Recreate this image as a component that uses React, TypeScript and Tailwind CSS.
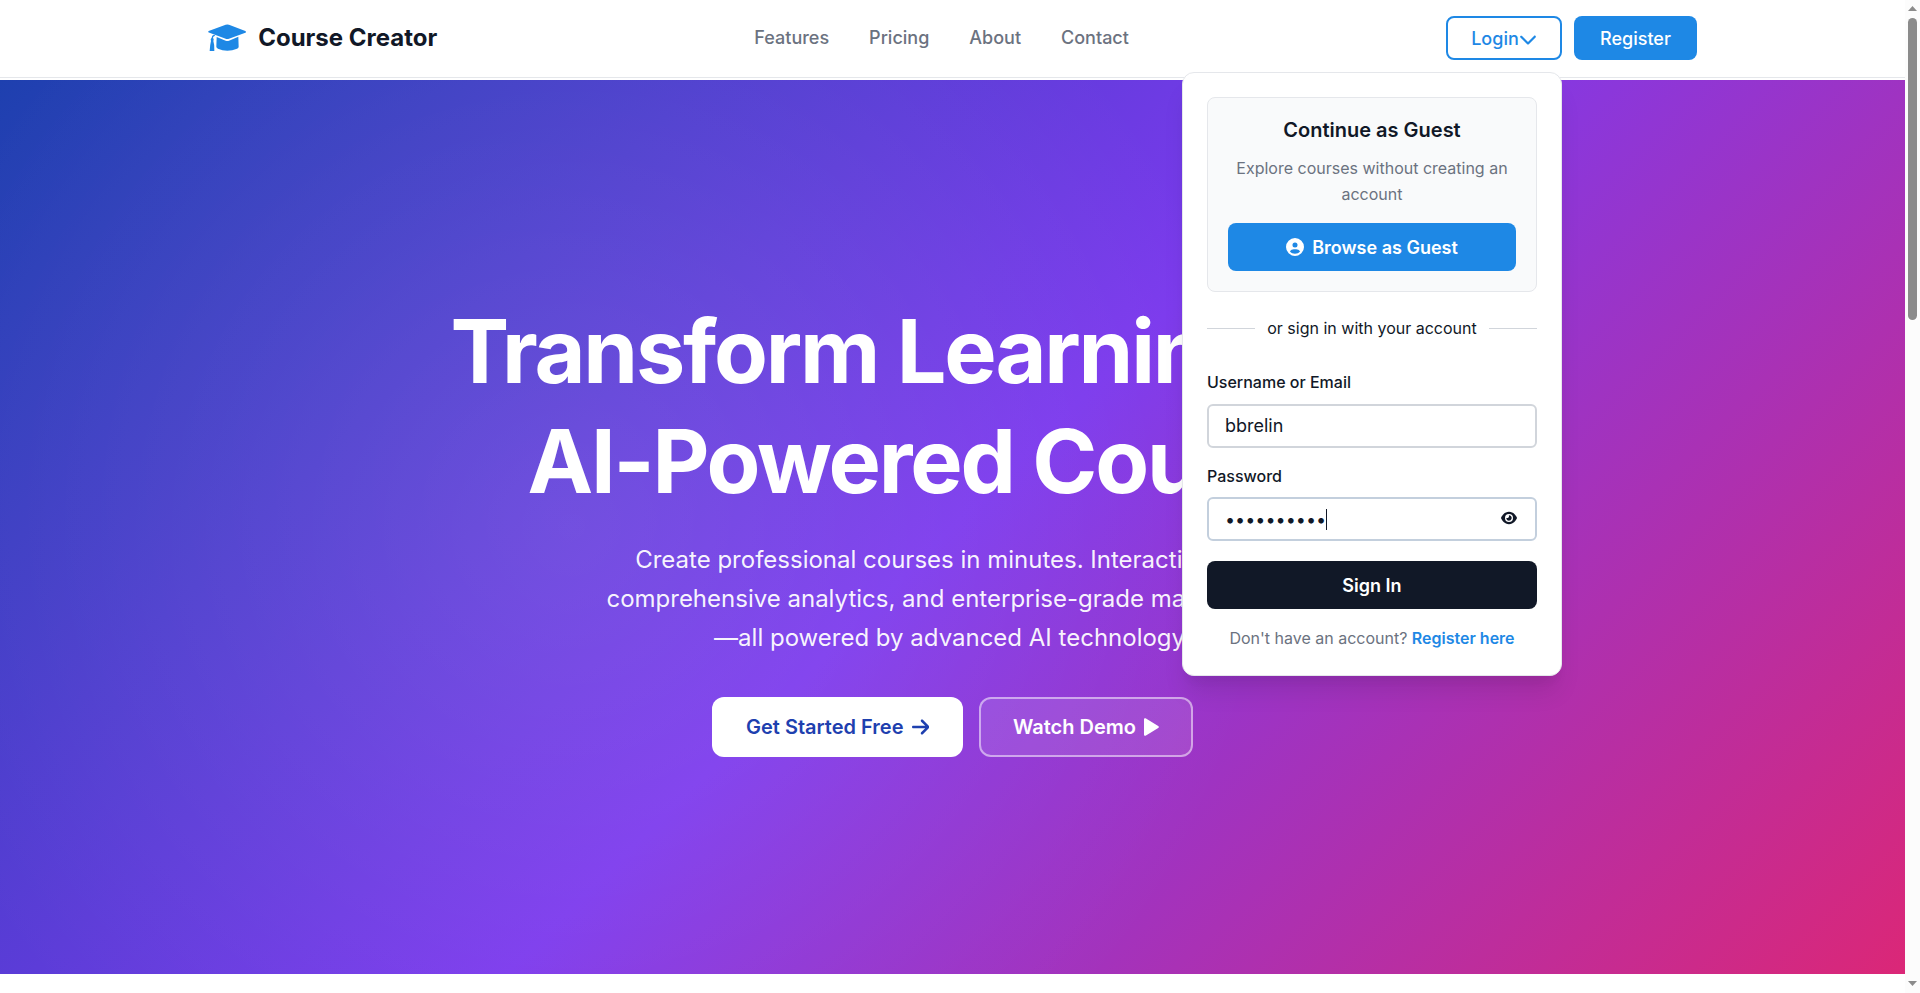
import React from "react";
import { FaChevronDown, FaCircleUser, FaEye, FaArrowRight } from "react-icons/fa6";

const links = ["Features", "Pricing", "About", "Contact"];

function CapIcon() {
  return (
    <svg viewBox="0 0 116 82" className="h-[27.33px] w-[38.67px] fill-[#1e88e5]">
      <path d="M2 21Q-1 24 2.500 25.500L53 44Q58 46 63 44L112 26Q116 24 112 21L63 2.500Q58 0 53 2.500Z" />
      <path d="M26 39L53 50Q58 52 63 50L91 38L92 68Q92 72 87 74Q73 80 58 80Q43 80 30 74Q25 71 25 68Z" />
      <path d="M18 32Q11 33 11 41Q6 45 9 51Q6 62 5 81L19 81Q20 62 16 51Q19 46 15 41Q15 36 22 35Z" />
    </svg>
  );
}

function PlayIcon() {
  return (
    <svg viewBox="0 0 15 18" className="h-[18px] w-[15px] fill-current">
      <path d="M0 1.500C0 .3 1 -.2 2 .5L14.200 8C15.100 8.600 15.100 9.300 14.200 9.900L2 17.500C1 18.200 0 17.700 0 16.500Z" />
    </svg>
  );
}

function LoginPanel() {
  return (
    <div className="absolute top-[56px] right-0 z-20 w-[380px] rounded-xl border border-[#e5e7eb] bg-white p-6 font-normal text-[#111827] shadow-[0_20px_25px_-5px_rgba(0,0,0,0.1),0_10px_10px_-5px_rgba(0,0,0,0.04)]">
      <div className="h-[195px] rounded-lg border border-[#e5e7eb] bg-[#f9fafb] px-5 pt-4 text-center">
        <h3 className="text-xl leading-8 font-semibold">Continue as Guest</h3>
        <p className="mt-[9px] text-base leading-[26px] text-[#6b7280]">
          Explore courses without creating an account
        </p>
        <button className="mt-4 flex h-12 w-full items-center justify-center gap-2 rounded-lg bg-[#1e88e5] text-lg font-semibold text-white">
          <FaCircleUser className="size-[18px]" />
          <span className="pt-0.5">Browse as Guest</span>
        </button>
      </div>
      <div className="mt-6 flex h-6 items-center gap-3 text-base">
        <span className="mt-px h-px flex-1 bg-[#d1d5db]" />
        <span>or sign in with your account</span>
        <span className="mt-px h-px flex-1 bg-[#d1d5db]" />
      </div>
      <label className="mt-[29px] block text-base leading-[26px] font-medium">Username or Email</label>
      <div className="mt-[9px] flex h-11 items-center rounded-md border-2 border-[#d1d5db] px-4 text-lg">
        bbrelin
      </div>
      <label className="mt-[15px] block text-base leading-[26px] font-medium">Password</label>
      <div className="mt-2 flex h-11 items-center rounded-md border-2 border-[#c3cfdd] px-4">
        <span className="w-[101px] pt-px text-lg whitespace-nowrap">••••••••••</span>
        <span className="mt-px h-[21px] w-px bg-[#111827]" />
        <FaEye className="mr-0.5 mb-0.5 ml-auto size-4" />
      </div>
      <button className="mt-5 block h-12 w-full rounded-lg bg-[#111827] pt-0.5 text-lg font-semibold text-white">
        Sign In
      </button>
      <p className="mt-[17px] pb-px text-center text-base leading-6 text-[#6b7280]">
        Don't have an account? <a className="font-semibold text-[#1e88e5]">Register here</a>
      </p>
    </div>
  );
}

function Header() {
  return (
    <header className="h-[78px] border-b border-[#e5e7eb] bg-white">
      <div className="mx-auto flex h-[76px] max-w-[1536px] items-center justify-between pr-[23.5px] pl-[23px]">
        <div className="flex items-center gap-3 text-2xl font-bold text-[#111827]">
          <CapIcon />
          <span>Course Creator</span>
        </div>
        <nav className="flex gap-10 text-lg font-medium text-[#6b7280]">
          {links.map((l) => (
            <a key={l}>{l}</a>
          ))}
        </nav>
        <div className="flex gap-3 text-lg font-medium">
          <div className="relative">
            <button className="flex h-11 w-[116px] items-center justify-center rounded-lg border-2 border-[#1e88e5] text-[#1e88e5]">
              <span className="pt-0.5">Login</span>
              <FaChevronDown className="mt-px size-[18px]" />
            </button>
            <LoginPanel />
          </div>
          <button className="h-11 w-[123px] rounded-lg bg-[#1e88e5] pt-0.5 text-white">Register</button>
        </div>
      </div>
    </header>
  );
}

function Hero() {
  return (
    <section className="mt-0.5 flex h-[894px] flex-col items-center bg-[radial-gradient(circle_at_30%_50%,rgba(255,255,255,0.1)_0%,transparent_50%),linear-gradient(135deg,#1e40af_0%,#7c3aed_50%,#db2777_100%)] pt-[216px] text-center text-white">
      <h1 className="text-[88px] leading-[110px] font-bold tracking-[-0.025em] whitespace-nowrap">
        Transform Learning with
        <br />
        AI-Powered Courses
      </h1>
      <p className="mt-6 text-2xl leading-[39px] whitespace-nowrap text-white/95">
        Create professional courses in minutes. Interactive labs,
        <br />
        comprehensive analytics, and enterprise-grade management
        <br />
        —all powered by advanced AI technology.
      </p>
      <div className="mt-10 flex gap-4 text-xl font-semibold">
        <button className="flex h-[60px] w-[251px] items-center justify-center gap-2 rounded-xl bg-white text-[#1e40af]">
          Get Started Free
          <FaArrowRight className="h-5 w-[17.5px]" />
        </button>
        <button className="flex h-[60px] w-[214px] items-center justify-center gap-2 rounded-xl border-2 border-white/50 bg-white/10">
          Watch Demo
          <PlayIcon />
        </button>
      </div>
    </section>
  );
}

function Scrollbar() {
  return (
    <div className="flex h-[993px] w-[15px] flex-col items-center bg-[#fcfcfc]">
      <svg className="mt-1.5 h-[5px] w-[9px]" viewBox="0 0 9 5">
        <path d="M4.5 0 9 5H0z" fill="#8b8b8b" />
      </svg>
      <div className="mt-[7px] h-[302px] w-[9px] rounded-full bg-[#8b8b8b]" />
      <svg className="mt-auto mb-[7px] h-[5px] w-[9px]" viewBox="0 0 9 5">
        <path d="M0 0h9L4.5 5z" fill="#8b8b8b" />
      </svg>
    </div>
  );
}

export default function App() {
  return (
    <div className="flex h-[993px] w-[1920px] overflow-hidden bg-white font-['Inter',sans-serif]">
      <main className="w-[1905px]">
        <Header />
        <Hero />
      </main>
      <Scrollbar />
    </div>
  );
}
